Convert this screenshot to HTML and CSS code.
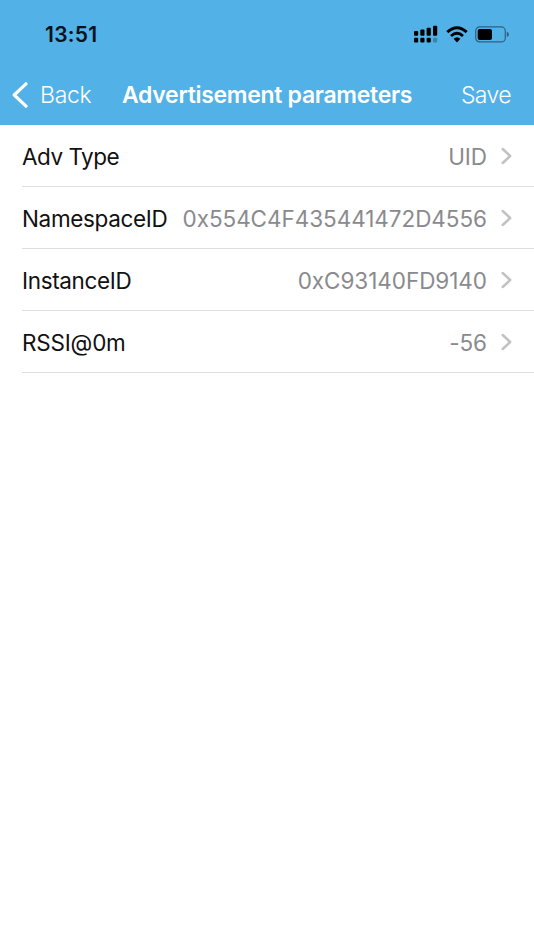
FILE: index.html
```html
<!DOCTYPE html>
<html lang="en">
<head>
    <meta charset="UTF-8">
    <meta name="viewport" content="width=device-width, initial-scale=1.0">
    <title>Advertisement parameters</title>
    <link rel="stylesheet" href="styles.css">
</head>
<body>
    <header class="header">
        <div class="status-bar">
            <span class="time">13:51</span>
            <div class="status-icons">
                <svg class="signal" width="24" height="18" viewBox="0 0 24 18">
                    <rect x="0" y="6" width="4.2" height="4.7" rx="1"/>
                    <rect x="6.3" y="4.5" width="4.2" height="6.2" rx="1"/>
                    <rect x="12.6" y="2.7" width="4.2" height="8" rx="1"/>
                    <rect x="19" y="0.8" width="4.2" height="9.9" rx="1"/>
                    <rect x="0" y="12.8" width="4.2" height="4.7" rx="1"/>
                    <rect x="6.3" y="12.8" width="4.2" height="4.7" rx="1"/>
                    <rect x="12.6" y="12.8" width="4.2" height="4.7" rx="1"/>
                    <rect class="faded" x="19" y="12.8" width="4.2" height="4.7" rx="1"/>
                </svg>
                <svg class="wifi" width="22" height="17" viewBox="0 0 22 17">
                    <path d="M1.3 6.2 Q11 -2.8 20.7 6.2" fill="none" stroke="#000" stroke-width="3"/>
                    <path d="M5 10 Q11 4.6 17 10" fill="none" stroke="#000" stroke-width="2.8"/>
                    <path d="M7.6 12.8 Q11 9.8 14.4 12.8 L11 16.4 Z"/>
                </svg>
                <svg class="battery" width="34" height="17" viewBox="0 0 34 17">
                    <rect class="battery-case" x="0.7" y="0.9" width="29.6" height="15" rx="4"/>
                    <rect x="2.7" y="2.9" width="14.3" height="11" rx="2"/>
                    <path class="battery-tip" d="M31.8 5.8 Q34 6.5 34 8.4 Q34 10.3 31.8 11 Z"/>
                </svg>
            </div>
        </div>
        <nav class="nav-bar">
            <a class="back">
                <svg width="16" height="26" viewBox="0 0 16 26">
                    <path d="M14 1.8 L2.2 13 L14 24.2"/>
                </svg>
                <span>Back</span>
            </a>
            <h1>Advertisement parameters</h1>
            <a class="save">Save</a>
        </nav>
    </header>

    <ul class="list">
        <li class="row">
            <span class="label adv-type">Adv Type</span>
            <span class="value">UID</span>
            <svg class="chevron" width="11" height="18" viewBox="0 0 11 18"><path d="M1.7 2 L9.2 9 L1.7 16"/></svg>
        </li>
        <li class="row">
            <span class="label">NamespaceID</span>
            <span class="value">0x554C4F435441472D4556</span>
            <svg class="chevron" width="11" height="18" viewBox="0 0 11 18"><path d="M1.7 2 L9.2 9 L1.7 16"/></svg>
        </li>
        <li class="row">
            <span class="label">InstanceID</span>
            <span class="value">0xC93140FD9140</span>
            <svg class="chevron" width="11" height="18" viewBox="0 0 11 18"><path d="M1.7 2 L9.2 9 L1.7 16"/></svg>
        </li>
        <li class="row">
            <span class="label rssi">RSSI@0m</span>
            <span class="value">-56</span>
            <svg class="chevron" width="11" height="18" viewBox="0 0 11 18"><path d="M1.7 2 L9.2 9 L1.7 16"/></svg>
        </li>
    </ul>
</body>
</html>
```
FILE: styles.css
```css
* {
    margin: 0;
    padding: 0;
    box-sizing: border-box;
    font-family: Inter, sans-serif;
}

body {
    min-height: 100vh;
    background: #fff;
}

.header {
    height: 125px;
    background: #52b1e6;
}

.status-bar {
    height: 64px;
    padding: 4px 25px 0 45px;
    display: flex;
    justify-content: space-between;
    align-items: center;
}

.time {
    font-size: 21px;
    font-weight: 600;
    letter-spacing: 0.3px;
    color: #06121c;
}

.status-icons {
    display: flex;
    align-items: center;
    gap: 7px;
}

.signal {
    margin-right: 1px;
}

.faded {
    opacity: 0.25;
}

.battery-case {
    fill: none;
    stroke: #000;
    stroke-opacity: 0.45;
    stroke-width: 1.2;
}

.battery-tip {
    fill-opacity: 0.45;
}

.nav-bar {
    height: 61px;
    padding: 0 23px 0 12px;
    display: grid;
    grid-template-columns: 110px 1fr auto;
    align-items: center;
    color: #fff;
}

.nav-bar h1 {
    font-size: 23px;
    font-weight: 600;
    letter-spacing: -0.3px;
    white-space: nowrap;
}

.back {
    display: flex;
    align-items: center;
    gap: 12px;
    font-size: 23px;
    font-weight: 300;
    letter-spacing: -0.3px;
}

.back path {
    fill: none;
    stroke: #fff;
    stroke-width: 3.2;
    stroke-linecap: round;
    stroke-linejoin: round;
}

.save {
    font-size: 23px;
    font-weight: 300;
    letter-spacing: -0.6px;
}

.list {
    padding-left: 22px;
    list-style: none;
}

.row {
    height: 62px;
    padding: 2px 22px 0 0;
    display: flex;
    align-items: center;
    border-bottom: 1px solid #dededf;
    font-size: 22.5px;
    white-space: nowrap;
}

.label {
    color: #111;
    letter-spacing: -0.35px;
}

.adv-type {
    letter-spacing: -0.5px;
}

.rssi {
    letter-spacing: -0.2px;
}

.value {
    margin-left: auto;
    color: #8a8a8e;
    letter-spacing: -0.05px;
}

.chevron {
    margin: -2px 0 0 14px;
}

.chevron path {
    fill: none;
    stroke: #c2c2c5;
    stroke-width: 2.5;
    stroke-linecap: round;
    stroke-linejoin: round;
}
```
